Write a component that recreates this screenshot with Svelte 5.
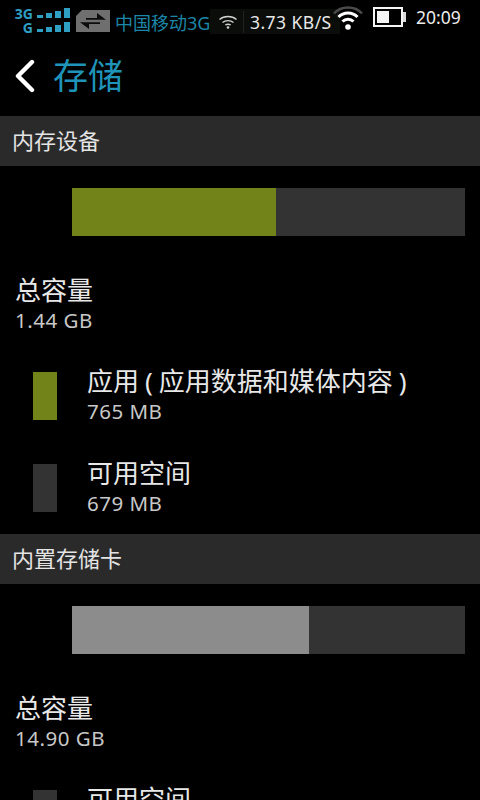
<script lang="ts">
  const signalBars = [3, 5, 7, 10];
</script>

<div class="screen">
  <div class="status">
    <div class="sig">
      <div class="sig-row">
        <span class="sig-label">3G</span>
        <span class="bars">{#each signalBars as h}<i style="height:{h}px"></i>{/each}</span>
      </div>
      <div class="sig-row">
        <span class="sig-label">G</span>
        <span class="bars">{#each signalBars as h}<i style="height:{h}px"></i>{/each}</span>
      </div>
    </div>
    <svg class="swap" width="34" height="22" viewBox="0 0 34 22">
      <path d="M6 0H34V22H0V6Z" fill="#6f6f6f" />
      <path d="M10 8H21V3L30 9.8H10Z M24 14H13V19L4 12.2H24Z" fill="#0c0c0c" />
    </svg>
    <span class="carrier">中国移动3G</span>
    <div class="speed-box">
      <svg class="wifi-small" width="20" height="16" viewBox="0 0 20 16" fill="none" stroke="#d0d0d0" stroke-width="1.4">
        <path d="M1.5 5.5C6 1.5 14 1.5 18.5 5.5" />
        <path d="M4.5 8.5C7.5 6 12.5 6 15.5 8.5" />
        <path d="M7.3 11C9 10 11 10 12.7 11" />
        <circle cx="10" cy="13.5" r="1.3" fill="#d0d0d0" stroke="none" />
      </svg>
      <span class="divider"></span>
      <span class="speed">3.73 KB/S</span>
    </div>
    <svg class="wifi" width="32" height="28" viewBox="0 0 32 28" fill="none">
      <path d="M2 10.5C9 2.5 23 2.5 30 10.5" stroke="#4a4a4a" stroke-width="2.5" />
      <path d="M6.5 14C11.5 8.5 20.5 8.5 25.5 14" stroke="#fff" stroke-width="3" />
      <path d="M10.5 18.5C13.5 15.5 18.5 15.5 21.5 18.5" stroke="#fff" stroke-width="3" />
      <circle cx="16" cy="24" r="2.8" fill="#fff" />
    </svg>
    <div class="battery"><span class="battery-fill"></span></div>
    <span class="battery-cap"></span>
    <span class="clock">20:09</span>
  </div>

  <header class="title-bar">
    <svg class="back" width="22" height="34" viewBox="0 0 22 34" fill="none">
      <path d="M18 3L4 17L18 31" stroke="#fff" stroke-width="4.4" stroke-linecap="round" stroke-linejoin="round" />
    </svg>
    <h1>存储</h1>
  </header>

  <div class="section-head">内存设备</div>
  <div class="usage"><span class="seg olive" style="width:204px"></span></div>
  <div class="total">
    <div class="label">总容量</div>
    <div class="value">1.44 GB</div>
  </div>
  <div class="item">
    <span class="swatch olive"></span>
    <div>
      <div class="label">应用 ( 应用数据和媒体内容 )</div>
      <div class="value">765 MB</div>
    </div>
  </div>
  <div class="item">
    <span class="swatch dark"></span>
    <div>
      <div class="label">可用空间</div>
      <div class="value">679 MB</div>
    </div>
  </div>

  <div class="section-head second">内置存储卡</div>
  <div class="usage"><span class="seg grey" style="width:237px"></span></div>
  <div class="total">
    <div class="label">总容量</div>
    <div class="value">14.90 GB</div>
  </div>
  <div class="item">
    <span class="swatch dark"></span>
    <div>
      <div class="label">可用空间</div>
    </div>
  </div>
</div>

<style>
  :global(body) { margin: 0; background: #000; }
  .screen { width: 480px; height: 800px; overflow: hidden; background: #000; color: #e6e6e6; font-family: "Noto Sans", "Noto Sans CJK SC", sans-serif; }

  .status { height: 38px; display: flex; align-items: flex-start; position: relative; }
  .sig { width: 56px; margin: 7px 0 0 14px; flex: none; display: flex; flex-direction: column; gap: 1px; }
  .sig-row { display: flex; align-items: flex-end; height: 13px; }
  .sig-label { width: 19px; text-align: right; font-size: 14px; line-height: 13px; font-weight: 700; color: #2f9fc4; }
  .bars { display: flex; align-items: flex-end; gap: 3px; margin: 0 0 2px 4px; }
  .bars i { display: block; width: 6px; background: #2f9fc4; }
  .swap { margin: 10px 0 0 6px; flex: none; }
  .carrier { margin: 12px 0 0 5px; font-size: 18px; line-height: 22px; color: #1c86a6; white-space: nowrap; flex: none; }
  .speed-box { position: absolute; left: 210px; top: 9px; width: 130px; height: 25px; background: #0b0d0b; display: flex; align-items: center; }
  .wifi-small { margin-left: 8px; flex: none; }
  .divider { width: 1px; height: 22px; margin-left: 5px; background: #222; flex: none; }
  .speed { margin-left: 6px; font-size: 17.5px; letter-spacing: 0.45px; color: #e8e8e8; white-space: nowrap; }
  .wifi { position: absolute; left: 332px; top: 3px; }
  .battery { position: absolute; left: 373px; top: 7px; width: 30px; height: 20px; border: 2px solid #f4f4f4; box-sizing: border-box; padding: 2px; background: #000; }
  .battery-fill { display: block; width: 12px; height: 100%; background: #f4f4f4; }
  .battery-cap { position: absolute; left: 403px; top: 12px; width: 3px; height: 10px; background: #d8d8d8; }
  .clock { position: absolute; left: 416px; top: 6px; font-size: 17.5px; line-height: 22px; color: #ececec; }

  .title-bar { height: 78px; display: flex; align-items: center; padding-bottom: 2px; box-sizing: border-box; }
  .back { margin-left: 14px; flex: none; }
  h1 { margin: 0 0 0 17px; font-size: 35px; line-height: 46px; font-weight: 400; color: #1f94b8; }

  .section-head { height: 50px; box-sizing: border-box; padding: 0 0 5px 12px; display: flex; align-items: center; background: #2a2a2a; font-size: 22px; color: #e4e4e4; }
  .section-head.second { margin-top: 16px; }
  .usage { height: 48px; margin: 22px 15px 0 72px; display: flex; background: #333; }
  .seg { display: block; height: 100%; }
  .olive { background: #728419; }
  .grey { background: #8c8c8c; }
  .dark { background: #333; }

  .label { font-size: 26px; line-height: 34px; word-spacing: -0.8px; color: #e8e8e8; white-space: nowrap; }
  .value { font-size: 20.5px; line-height: 27px; letter-spacing: 0.5px; color: #c8c8c8; white-space: nowrap; }
  .total { margin: 37px 0 0 15px; }
  .item { display: flex; margin-top: 30px; height: 62px; }
  .swatch { width: 24px; height: 48px; margin: 8px 30px 0 33px; flex: none; }
</style>
